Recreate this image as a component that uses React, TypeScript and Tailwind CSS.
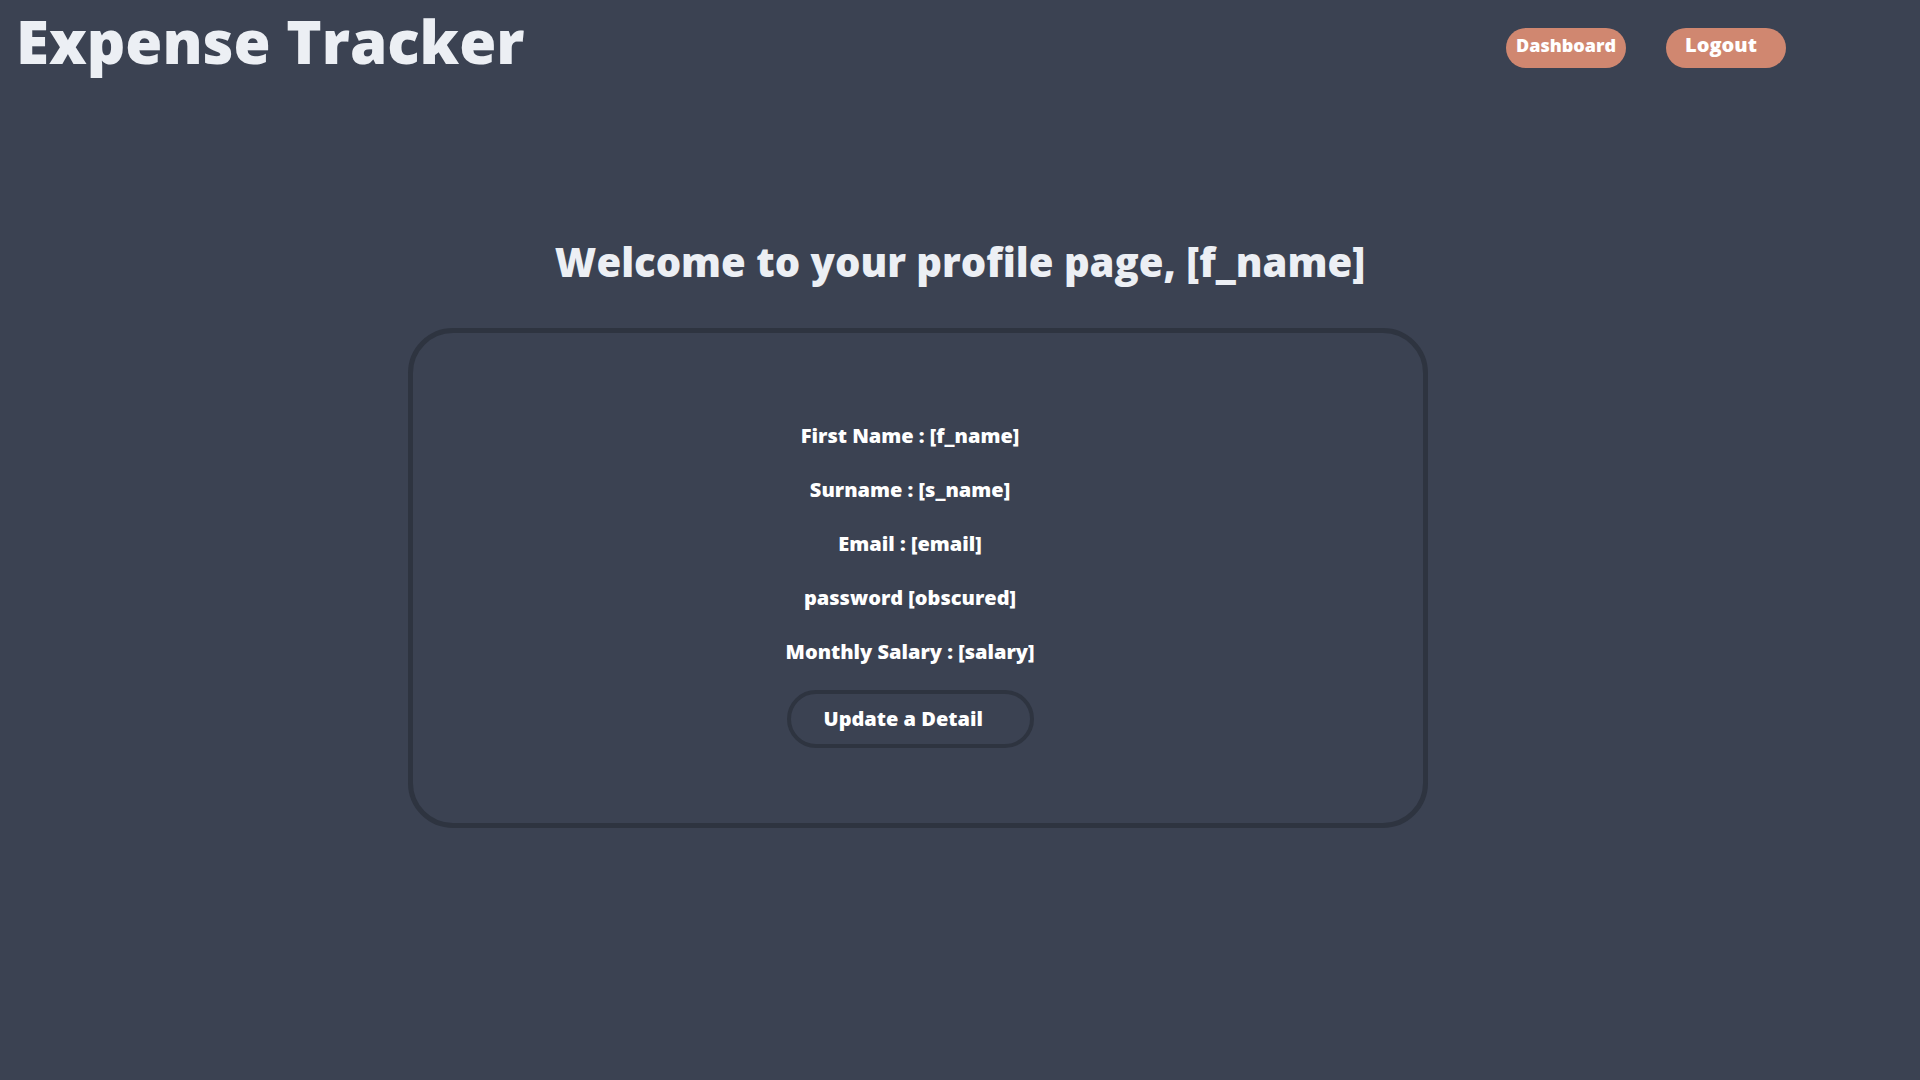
import React from 'react';

const details = [
  'First Name : [f_name]',
  'Surname : [s_name]',
  'Email : [email]',
  'password [obscured]',
  'Monthly Salary : [salary]',
];

const App = () => {
  return (
    <div className="min-h-screen w-full bg-[#3b4252] text-[#eceff4] font-['Open_Sans',sans-serif]">
      {/* Header */}
      <header className="flex items-start justify-between pl-4 pr-[134px]">
        <h1 className="text-[60px] font-extrabold leading-[72px] pt-[5px] pb-[4px]">Expense Tracker</h1>
        <nav className="flex gap-10 pt-7">
          <button className="w-[120px] h-10 rounded-full bg-[#d08770] text-white text-[18px] font-extrabold leading-none pb-[6px]">
            Dashboard
          </button>
          <button className="w-[120px] h-10 rounded-full bg-[#d08770] text-white text-[20px] font-extrabold leading-none text-left pl-[19px] pb-[6px]">
            Logout
          </button>
        </nav>
      </header>

      {/* Profile */}
      <main className="flex flex-col pt-[155px]">
        <h2 className="text-center text-[40px] font-extrabold leading-[52px]">
          Welcome to your profile page, [f_name]
        </h2>
        <section className="mt-[40px] ml-[408px] w-[1020px] h-[500px] rounded-[45px] border-[5px] border-[#2e3440] pt-[89px] pr-4">
          <div className="flex flex-col items-center gap-[26px]">
            {details.map((line) => (
              <p key={line} className="text-[20px] leading-[28px] font-extrabold text-white">
                {line}
              </p>
            ))}
          </div>
          <div className="flex justify-center mt-[24px]">
            <button className="w-[247px] h-[58px] rounded-full border-4 border-[#2e3440] text-left pl-[33px] text-[20px] font-extrabold text-white">
              Update a Detail
            </button>
          </div>
        </section>
      </main>
    </div>
  );
};

export default App;
